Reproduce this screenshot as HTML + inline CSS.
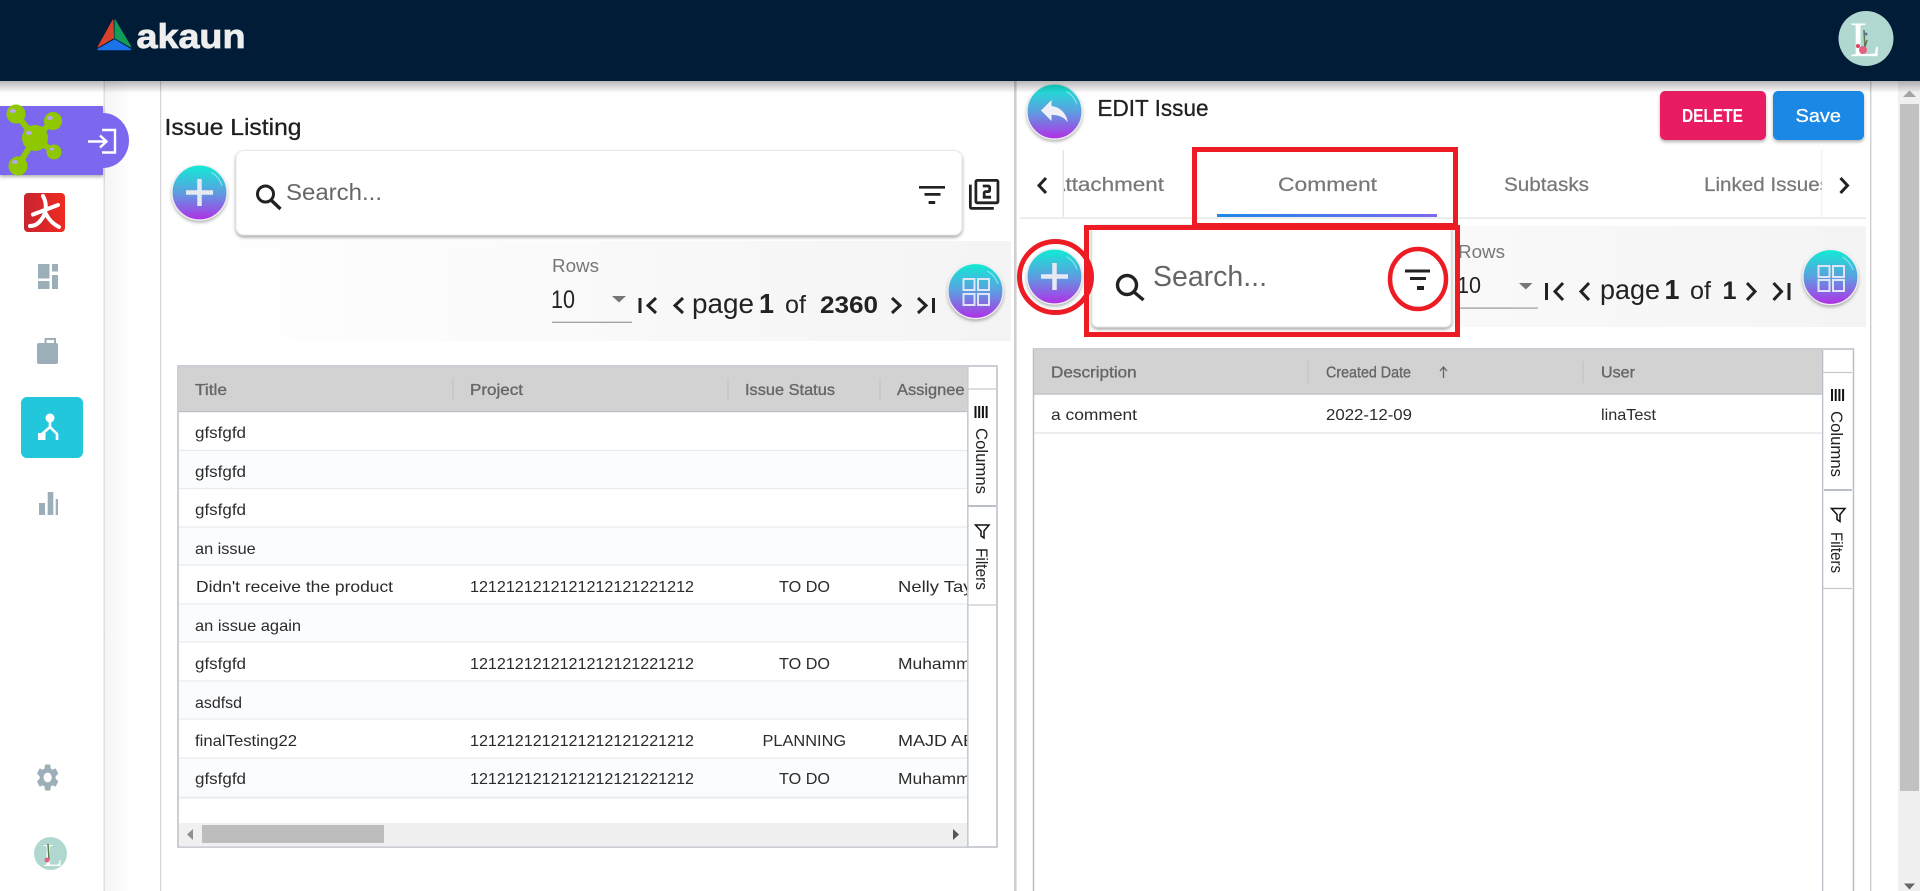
<!DOCTYPE html>
<html lang="en"><head><meta charset="utf-8"><title>Issue Listing</title>
<style>
html,body{margin:0;padding:0;background:#fff;width:1920px;height:891px;overflow:hidden}
svg{display:block}
text{font-family:"Liberation Sans",Arial,sans-serif}
.r{font-size:16px;fill:#2b2b2b}
.h{font-size:16px;fill:#666;stroke:#666;stroke-width:.35px}
.t{font-size:19px;fill:#777;stroke:#777;stroke-width:.2px}
.p{fill:#222}
.c{fill:none;stroke:#222;stroke-width:3}
</style></head><body>
<svg xmlns="http://www.w3.org/2000/svg" width="1920" height="891" viewBox="0 0 1920 891">
<defs>
<linearGradient id="bg" x1="0" y1="0" x2="0" y2="1"><stop offset="0" stop-color="#10ecd4"/><stop offset=".5" stop-color="#5c9fe0"/><stop offset="1" stop-color="#b22ee6"/></linearGradient>
<linearGradient id="band" x1="0" y1="0" x2="1" y2="0"><stop offset="0" stop-color="#fff"/><stop offset="1" stop-color="#f4f4f4"/></linearGradient>
<linearGradient id="side" x1="0" y1="0" x2="1" y2="0"><stop offset="0" stop-color="#f5f5f5"/><stop offset=".5" stop-color="#fff"/></linearGradient>
<linearGradient id="hs" x1="0" y1="0" x2="0" y2="1"><stop offset="0" stop-color="#000" stop-opacity=".28"/><stop offset="1" stop-color="#000" stop-opacity="0"/></linearGradient>
<linearGradient id="red" x1="0" y1="0" x2="1" y2="0"><stop offset="0" stop-color="#c9252f"/><stop offset=".45" stop-color="#d8262a"/><stop offset="1" stop-color="#f02b20"/></linearGradient>
<linearGradient id="tabu" x1="0" y1="0" x2="1" y2="0"><stop offset="0" stop-color="#1e88e5"/><stop offset="1" stop-color="#7b68ee"/></linearGradient>
<linearGradient id="edgeL" x1="0" y1="0" x2="1" y2="0"><stop offset="0" stop-color="#fff"/><stop offset=".8" stop-color="#fff"/><stop offset="1" stop-color="#d8d8d8"/></linearGradient>
<linearGradient id="edgeR" x1="0" y1="0" x2="1" y2="0"><stop offset="0" stop-color="#d8d8d8"/><stop offset=".1" stop-color="#fff"/><stop offset="1" stop-color="#fff"/></linearGradient>
<filter id="sh" x="-20%" y="-20%" width="140%" height="150%"><feDropShadow dx="0" dy="2" stdDeviation="1.5" flood-color="#000" flood-opacity=".3"/></filter>
<filter id="shb" x="-20%" y="-20%" width="140%" height="150%"><feDropShadow dx="0" dy="2" stdDeviation="1.5" flood-color="#000" flood-opacity=".35"/></filter>
<clipPath id="cl"><rect x="179" y="412" width="788" height="386"/></clipPath>
<clipPath id="cll"><rect x="1063" y="150" width="759" height="68"/></clipPath>
<symbol id="btn" viewBox="-30 -30 60 60" width="60" height="60" overflow="visible">
<circle r="27.5" fill="url(#bg)" stroke="#eceff2" stroke-width="1.2" filter="url(#sh)"/>
<path d="M12 -20 A23.5 23.5 0 0 1 22.5 -7" fill="none" stroke="#fff" stroke-opacity=".45" stroke-width="1.2"/>
</symbol>
</defs>

<!-- content background -->
<rect width="1920" height="891" fill="#fff"/>
<rect x="105" y="81" width="55" height="810" fill="url(#side)"/>
<rect x="103.5" y="81" width="1.5" height="810" fill="#dedede"/>
<rect x="160" y="81" width="1.2" height="810" fill="#d4d4d4"/>

<!-- right scrollbar -->
<rect x="1898" y="81" width="22" height="810" fill="#f0f0f0"/>
<rect x="1900" y="104" width="19" height="687" fill="#c1c1c1"/>
<path d="M1903 97 L1909.5 90.5 L1916 97Z" fill="#a3a3a3"/>
<path d="M1904 883.5 H1915 L1909.5 889.5Z" fill="#666"/>
<rect x="1870" y="81" width="1.4" height="810" fill="#cfcfcf"/>

<!-- left panel -->
<text x="164.500" y="135" font-size="23" fill="#1f1f1f" stroke="#1f1f1f" stroke-width=".3" textLength="137" lengthAdjust="spacingAndGlyphs">Issue Listing</text>
<rect x="165" y="241" width="846" height="100" fill="url(#band)"/>
<use href="#btn" x="169.5" y="162.5"/>
<path d="M199.5 179v27M186 192.500h27" stroke="#e6e9f2" stroke-width="4.500"/>
<rect x="236" y="150.5" width="726" height="84.5" rx="8" fill="#fff" stroke="#e9e9e9" filter="url(#shb)"/>
<circle cx="265.5" cy="194" r="8" fill="none" stroke="#222" stroke-width="3"/>
<path d="M271 200l9.5 9" stroke="#222" stroke-width="3.4"/>
<text x="286" y="200" font-size="23" fill="#666" textLength="96" lengthAdjust="spacingAndGlyphs">Search...</text>
<path d="M919 186h26v2.6h-26zM924.5 193h16v2.8h-16zM928.6 201h6.6v3h-6.6z" fill="#222"/>
<path transform="translate(967.6 177.6) scale(1.38 1.4)" fill="#222" d="M3 5H1v16c0 1.1.9 2 2 2h16v-2H3V5zm18-4H7c-1.1 0-2 .9-2 2v14c0 1.1.9 2 2 2h14c1.1 0 2-.9 2-2V3c0-1.1-.9-2-2-2zm0 16H7V3h14v14zm-4-4h-4v-2h2c1.1 0 2-.89 2-2V7c0-1.11-.9-2-2-2h-4v2h4v2h-2c-1.1 0-2 .89-2 2v4h6v-2z"/>

<text x="552" y="272" font-size="18" fill="#777" textLength="47" lengthAdjust="spacingAndGlyphs">Rows</text>
<text x="551" y="308" font-size="25" fill="#222" textLength="24" lengthAdjust="spacingAndGlyphs">10</text>
<path d="M612 296h14l-7 6.5z" fill="#777"/>
<rect x="552" y="321.7" width="80" height="1.2" fill="#999"/>
<path d="M640 298v15M656 298l-8 7.5 8 7.5M683 298l-8 7.5 8 7.5M892 298l8 7.5-8 7.5M918 298l8 7.5-8 7.5M933.5 298v15" class="c"/>
<text x="692" y="313" font-size="28" class="p" textLength="62" lengthAdjust="spacingAndGlyphs">page</text>
<text x="759" y="313" font-size="28" font-weight="bold" class="p" textLength="15" lengthAdjust="spacingAndGlyphs">1</text>
<text x="785" y="313" font-size="25" class="p" textLength="21" lengthAdjust="spacingAndGlyphs">of</text>
<text x="820" y="313" font-size="24" font-weight="bold" class="p" textLength="58" lengthAdjust="spacingAndGlyphs">2360</text>
<use href="#btn" x="945.5" y="261"/>
<path d="M963.5 279h11v11h-11zM978 279h11v11h-11zM963.5 294h11v11h-11zM978 294h11v11h-11z" fill="none" stroke="#dfe5f5" stroke-width="2"/>

<!-- left table -->
<rect x="178" y="366" width="819" height="481" fill="#fff" stroke="#babfc7" stroke-width="1.5"/>
<rect x="179" y="367" width="788" height="44.5" fill="#d2d2d2"/>
<rect x="179" y="411" width="788" height="1.2" fill="#babfc7"/>
<path d="M453 378v22M728 378v22M880 378v22" stroke="#c6c6c6" stroke-width="1.5"/>
<rect x="179" y="450.5" width="788" height="38" fill="#fbfcfe"/>
<rect x="179" y="527" width="788" height="38" fill="#fbfcfe"/>
<rect x="179" y="604" width="788" height="38" fill="#fbfcfe"/>
<rect x="179" y="681" width="788" height="38" fill="#fbfcfe"/>
<rect x="179" y="758" width="788" height="39" fill="#fbfcfe"/>
<path d="M179 450.5h788M179 488.5h788M179 527h788M179 565h788M179 604h788M179 642h788M179 681h788M179 719h788M179 758h788" stroke="#e8ebef" stroke-width="1.2"/>
<rect x="179" y="796.5" width="788" height="2" fill="#e8ebef"/>
<text x="195" y="395" class="h" textLength="32" lengthAdjust="spacingAndGlyphs">Title</text>
<text x="470" y="395" class="h" textLength="53" lengthAdjust="spacingAndGlyphs">Project</text>
<text x="745" y="395" class="h" textLength="90" lengthAdjust="spacingAndGlyphs">Issue Status</text>
<text x="897" y="395" class="h" textLength="67.5" lengthAdjust="spacingAndGlyphs">Assignee</text>
<g class="rows">
<text x="195" y="438" class="r" textLength="51" lengthAdjust="spacingAndGlyphs">gfsfgfd</text>
<text x="195" y="477" class="r" textLength="51" lengthAdjust="spacingAndGlyphs">gfsfgfd</text>
<text x="195" y="515" class="r" textLength="51" lengthAdjust="spacingAndGlyphs">gfsfgfd</text>
<text x="195" y="554" class="r" textLength="60.7" lengthAdjust="spacingAndGlyphs">an issue</text>
<text x="196" y="592" class="r" textLength="197" lengthAdjust="spacingAndGlyphs">Didn't receive the product</text>
<text x="195" y="631" class="r" textLength="106" lengthAdjust="spacingAndGlyphs">an issue again</text>
<text x="195" y="669" class="r" textLength="51" lengthAdjust="spacingAndGlyphs">gfsfgfd</text>
<text x="195" y="708" class="r" textLength="47" lengthAdjust="spacingAndGlyphs">asdfsd</text>
<text x="195" y="746" class="r" textLength="102" lengthAdjust="spacingAndGlyphs">finalTesting22</text>
<text x="195" y="784" class="r" textLength="51" lengthAdjust="spacingAndGlyphs">gfsfgfd</text>
<text x="470" y="592" class="r" textLength="224" lengthAdjust="spacingAndGlyphs">1212121212121212121221212</text>
<text x="470" y="669" class="r" textLength="224" lengthAdjust="spacingAndGlyphs">1212121212121212121221212</text>
<text x="470" y="746" class="r" textLength="224" lengthAdjust="spacingAndGlyphs">1212121212121212121221212</text>
<text x="470" y="784" class="r" textLength="224" lengthAdjust="spacingAndGlyphs">1212121212121212121221212</text>
<text x="779" y="592" class="r" textLength="51" lengthAdjust="spacingAndGlyphs">TO DO</text>
<text x="779" y="669" class="r" textLength="51" lengthAdjust="spacingAndGlyphs">TO DO</text>
<text x="762.5" y="746" class="r" textLength="83.6" lengthAdjust="spacingAndGlyphs">PLANNING</text>
<text x="779" y="784" class="r" textLength="51" lengthAdjust="spacingAndGlyphs">TO DO</text>
<g clip-path="url(#cl)">
<text x="898" y="592" class="r" textLength="95" lengthAdjust="spacingAndGlyphs">Nelly Taylor</text>
<text x="898" y="669" class="r" textLength="92" lengthAdjust="spacingAndGlyphs">Muhammad</text>
<text x="898" y="746" class="r" textLength="90" lengthAdjust="spacingAndGlyphs">MAJD ABU</text>
<text x="898" y="784" class="r" textLength="92" lengthAdjust="spacingAndGlyphs">Muhammad</text>
</g>
</g>
<rect x="179" y="823" width="788" height="23.5" fill="#f0f0f0"/>
<rect x="202" y="825" width="182" height="18" fill="#bdbdbd"/>
<path d="M193 829v11l-6-5.500z" fill="#8f8f8f"/>
<path d="M953 829v11l6-5.500z" fill="#555"/>
<rect x="967.200" y="367" width="1.300" height="480" fill="#babfc7"/>
<path d="M968 389h28M968 605h28" stroke="#c5c9cf" stroke-width="1.200"/>
<path d="M968 506h28" stroke="#babfc7" stroke-width="2"/>
<path d="M975.500 406v12M979.200 406v12M982.900 406v12M986.600 406v12" stroke="#111" stroke-width="2"/>
<text transform="translate(976 428) rotate(90)" font-size="17" fill="#222" textLength="66" lengthAdjust="spacingAndGlyphs">Columns</text>
<path d="M975.500 525H989L984 531V538L981 536V531Z" fill="none" stroke="#111" stroke-width="1.500"/>
<text transform="translate(976 548) rotate(90)" font-size="17" fill="#222" textLength="42" lengthAdjust="spacingAndGlyphs">Filters</text>

<!-- divider -->
<rect x="1014" y="81" width="2.600" height="810" fill="#cfcfcf"/>

<!-- right panel top -->
<use href="#btn" x="1024.500" y="81.500"/>
<path transform="translate(1036.500 92.500) scale(1.500)" fill="#eef0f6" d="M10 9V5l-7 7 7 7v-4.100c5 0 8.500 1.600 11 5.100-1-5-4-10-11-11z"/>
<text x="1097.500" y="116" font-size="23" fill="#222" stroke="#222" stroke-width=".3" textLength="111" lengthAdjust="spacingAndGlyphs">EDIT Issue</text>
<rect x="1660" y="91" width="106" height="49" rx="5" fill="#e91e63" filter="url(#sh)"/>
<text x="1682" y="122" font-size="18" font-weight="bold" fill="#fff" textLength="61" lengthAdjust="spacingAndGlyphs">DELETE</text>
<rect x="1773" y="91" width="91" height="49" rx="5" fill="#1e88e5" filter="url(#sh)"/>
<text x="1795.500" y="122" font-size="18" fill="#fff" stroke="#fff" stroke-width=".3" textLength="45.500" lengthAdjust="spacingAndGlyphs">Save</text>

<!-- tabs -->
<g clip-path="url(#cll)">
<text x="1050.500" y="191" class="t" textLength="113.500" lengthAdjust="spacingAndGlyphs">Attachment</text>
<text x="1278" y="191" class="t" textLength="99" lengthAdjust="spacingAndGlyphs">Comment</text>
<text x="1504" y="191" class="t" textLength="85" lengthAdjust="spacingAndGlyphs">Subtasks</text>
<text x="1704" y="191" class="t" stroke-width=".4" textLength="126" lengthAdjust="spacingAndGlyphs">Linked Issues</text>
</g>
<rect x="1055" y="150" width="9" height="67" fill="url(#edgeL)"/>
<rect x="1821.500" y="150" width="9" height="67" fill="url(#edgeR)"/>
<path d="M1046 178l-7 7.500 7 7.500M1840.500 178l7 7.500-7 7.500" class="c"/>
<rect x="1020" y="217.500" width="846" height="1.200" fill="#e0e0e0"/>
<rect x="1217" y="214" width="220" height="3" fill="url(#tabu)"/>

<!-- right band -->
<rect x="1020" y="226" width="846" height="101" fill="url(#band)"/>
<text x="1458" y="258" font-size="18" fill="#777" textLength="47" lengthAdjust="spacingAndGlyphs">Rows</text>
<text x="1457" y="293" font-size="23" fill="#222" textLength="24" lengthAdjust="spacingAndGlyphs">10</text>
<path d="M1519 283h13.500l-6.700 6.500z" fill="#777"/>
<rect x="1458" y="307.500" width="80" height="1.200" fill="#999"/>
<path d="M1546.500 283v17M1563 283l-8 8.500 8 8.500M1589 283l-8 8.500 8 8.500M1747 283l8 8.500-8 8.500M1773.500 283l8 8.500-8 8.500M1789 283v17" class="c"/>
<text x="1600" y="299" font-size="28" class="p" textLength="60" lengthAdjust="spacingAndGlyphs">page</text>
<text x="1664.500" y="299" font-size="28" font-weight="bold" class="p" textLength="15" lengthAdjust="spacingAndGlyphs">1</text>
<text x="1690" y="299" font-size="25" class="p" textLength="21" lengthAdjust="spacingAndGlyphs">of</text>
<text x="1722.500" y="299" font-size="25" font-weight="bold" class="p" textLength="14" lengthAdjust="spacingAndGlyphs">1</text>
<use href="#btn" x="1800.500" y="247"/>
<path d="M1818.500 266h11v11h-11zM1833 266h11v11h-11zM1818.500 280h11v11h-11zM1833 280h11v11h-11z" fill="none" stroke="#dfe5f5" stroke-width="2"/>

<use href="#btn" x="1024.500" y="246.500"/>
<path d="M1054.500 263v27M1041 276.500h27" stroke="#e6e9f2" stroke-width="4.500"/>

<rect x="1092" y="225" width="359" height="102" rx="6" fill="#fff" stroke="#e9e9e9" filter="url(#shb)"/>
<circle cx="1127" cy="285" r="9.500" fill="none" stroke="#222" stroke-width="3.400"/>
<path d="M1134 292l9.500 8" stroke="#222" stroke-width="3.400"/>
<text x="1153" y="286" font-size="29" fill="#666" textLength="114" lengthAdjust="spacingAndGlyphs">Search...</text>
<path d="M1405 269.500h25v3h-25zM1410 277h16v3h-16zM1417 286h7v4h-7z" fill="#222"/>

<!-- right table -->
<rect x="1033.500" y="349" width="820" height="560" fill="#fff" stroke="#babfc7" stroke-width="1.500"/>
<rect x="1034" y="350" width="788" height="44" fill="#d2d2d2"/>
<rect x="1034" y="393.500" width="788" height="1.200" fill="#babfc7"/>
<path d="M1308 361v22M1583 361v22" stroke="#c6c6c6" stroke-width="1.500"/>
<path d="M1034 433h788" stroke="#dfe2e6" stroke-width="1.200"/>
<text x="1051" y="377.500" class="h" textLength="85.700" lengthAdjust="spacingAndGlyphs">Description</text>
<text x="1326" y="377.500" class="h" textLength="85" lengthAdjust="spacingAndGlyphs">Created Date</text>
<path d="M1443.500 378v-11M1440 371l3.500-4 3.500 4" fill="none" stroke="#666" stroke-width="1.300"/>
<text x="1601" y="377.500" class="h" textLength="34" lengthAdjust="spacingAndGlyphs">User</text>
<text x="1051" y="420" class="r" textLength="86" lengthAdjust="spacingAndGlyphs">a comment</text>
<text x="1326" y="420" class="r" textLength="86" lengthAdjust="spacingAndGlyphs">2022-12-09</text>
<text x="1601" y="420" class="r" textLength="55" lengthAdjust="spacingAndGlyphs">linaTest</text>
<rect x="1822" y="350" width="1.300" height="541" fill="#babfc7"/>
<path d="M1823 372.500h29M1823 588.500h29" stroke="#c5c9cf" stroke-width="1.200"/>
<path d="M1824 490h28" stroke="#babfc7" stroke-width="2"/>
<path d="M1832 389v12M1835.700 389v12M1839.400 389v12M1843.100 389v12" stroke="#111" stroke-width="2"/>
<text transform="translate(1831 411) rotate(90)" font-size="17" fill="#222" textLength="66" lengthAdjust="spacingAndGlyphs">Columns</text>
<path d="M1831.500 508.500H1845L1840 514.500V521.500L1837 519.500V514.500Z" fill="none" stroke="#111" stroke-width="1.500"/>
<text transform="translate(1831 532) rotate(90)" font-size="17" fill="#222" textLength="41" lengthAdjust="spacingAndGlyphs">Filters</text>

<!-- red annotations -->
<rect x="1194.500" y="149.500" width="261" height="76" fill="none" stroke="#ed1c24" stroke-width="5"/>
<rect x="1086.500" y="227.500" width="371" height="107" fill="none" stroke="#ed1c24" stroke-width="5"/>
<ellipse cx="1418" cy="279" rx="28" ry="30" fill="none" stroke="#ed1c24" stroke-width="4.500"/>
<ellipse cx="1055.500" cy="277" rx="36" ry="35.500" fill="none" stroke="#ed1c24" stroke-width="5"/>

<!-- sidebar icons -->
<rect x="0" y="106" width="103" height="69" fill="#7b68ee" filter="url(#sh)"/>
<path d="M103 113 A26 27.500 0 0 1 103 168Z" fill="#7b68ee"/>
<rect x="0" y="106" width="103" height="69" fill="#7b68ee"/>
<g fill="#8fc800">
<path d="M35 138L16 114M35 138L53 121M35 138L54 152M35 138L18 166" fill="none" stroke="#8fc800" stroke-width="6"/>
<circle cx="35" cy="138" r="13"/>
<circle cx="16" cy="114" r="9.500"/>
<circle cx="53" cy="121" r="9"/>
<circle cx="54" cy="152" r="7.500"/>
<circle cx="18" cy="166" r="9.500"/>
</g>
<g fill="#b7a7ea"><ellipse cx="13" cy="111" rx="3" ry="2"/><ellipse cx="50" cy="118" rx="3" ry="2"/><ellipse cx="29" cy="133" rx="3" ry="2"/><ellipse cx="15" cy="162" rx="3" ry="2"/><ellipse cx="52" cy="149" rx="2.500" ry="1.500"/></g>
<path d="M88 141.500h17M100 135.500l6.500 6-6.500 6M102 130h13v22.500h-13" fill="none" stroke="#fff" stroke-width="2.400"/>

<rect x="24" y="193" width="41" height="39" rx="4" fill="url(#red)"/>
<path d="M33 214.500L58 205M43 196C47 203 47 213 41 220 38 224 35 226 30 226M46 214C49 220 53 224 59 227" fill="none" stroke="#fff" stroke-width="4" stroke-linecap="round"/>

<g fill="#9cafb9">
<rect x="38" y="264" width="11.500" height="14.500"/><rect x="52" y="264" width="6" height="7.500"/><rect x="38" y="281" width="11.500" height="8"/><rect x="52" y="275" width="6" height="14"/>
<rect x="37" y="343" width="21" height="21" rx="2"/>
<rect x="39" y="503" width="6" height="12"/><rect x="47.700" y="492" width="5.600" height="23"/><rect x="55.700" y="499" width="2.300" height="16"/>
<path transform="translate(34.200 761.300) scale(1.120 1.350)" d="M19.140 12.940c.04-.3.06-.61.06-.94 0-.32-.02-.64-.07-.94l2.030-1.580c.18-.14.23-.41.12-.61l-1.920-3.320c-.12-.22-.37-.29-.59-.22l-2.390.96c-.5-.38-1.030-.7-1.620-.94l-.36-2.540c-.04-.24-.24-.41-.48-.41h-3.840c-.24 0-.43.17-.47.41l-.36 2.540c-.59.24-1.130.57-1.620.94l-2.390-.96c-.22-.08-.47 0-.59.22L2.740 8.870c-.12.21-.08.47.12.61l2.030 1.580c-.05.3-.09.63-.09.94s.02.64.07.94l-2.030 1.580c-.18.14-.23.41-.12.61l1.920 3.320c.12.22.37.29.59.22l2.390-.96c.5.38 1.030.7 1.620.94l.36 2.540c.05.24.24.41.48.41h3.840c.24 0 .44-.17.47-.41l.36-2.540c.59-.24 1.130-.56 1.620-.94l2.390.96c.22.08.47 0 .59-.22l1.920-3.320c.12-.22.07-.47-.12-.61l-2.010-1.580zM12 15.600c-1.980 0-3.600-1.620-3.600-3.600s1.620-3.600 3.600-3.600 3.600 1.620 3.600 3.600-1.620 3.600-3.600 3.600z"/>
</g>
<path d="M45.500 343v-4h9.500v4" fill="none" stroke="#9cafb9" stroke-width="2"/>
<rect x="21" y="397" width="62" height="61" rx="6" fill="#22c7dc"/>
<circle cx="50" cy="418" r="4.500" fill="#fff"/>
<path d="M50 421v7M50 427l-8 7M50 427l7 7v6" fill="none" stroke="#fff" stroke-width="2.600"/>
<rect x="38" y="433" width="7.500" height="7" fill="#fff"/>

<circle cx="50.500" cy="853.500" r="16.500" fill="#b0d8d0"/>
<text x="43" y="866" font-size="32" fill="#fff" style="font-family:'Liberation Serif',serif">L</text>
<path d="M48 844l1 16" stroke="#5a7a50" stroke-width="1.500"/>
<circle cx="47" cy="860" r="2.500" fill="#e2627e"/>

<!-- header -->
<rect x="0" y="81" width="1920" height="12" fill="url(#hs)"/>
<rect x="0" y="0" width="1920" height="81" fill="#001c37"/>
<path d="M113 20L98 47 113.500 38Z" fill="#d9412c" stroke="#d9412c" stroke-linejoin="round"/>
<path d="M115 20L131 47 115 38Z" fill="#0f9d58" stroke="#0f9d58" stroke-linejoin="round"/>
<path d="M114.500 40L130.500 49.500H98Z" fill="#1a73e8" stroke="#1a73e8" stroke-linejoin="round" stroke-width="1.500"/>
<text x="136.500" y="48" font-size="34" font-weight="bold" fill="#eeeeee" stroke="#eeeeee" stroke-width=".8" textLength="109" lengthAdjust="spacingAndGlyphs">akaun</text>
<circle cx="1866" cy="38.500" r="27.500" fill="#b0d8d0"/>
<text x="1850" y="56" font-size="50" fill="#fff" style="font-family:'Liberation Serif',serif" textLength="31" lengthAdjust="spacingAndGlyphs">L</text>
<path d="M1864 30l1 20M1867 40l-3 10" stroke="#5a7a50" stroke-width="1.500" fill="none"/>
<circle cx="1863" cy="50" r="4" fill="#e2627e"/><circle cx="1858" cy="46" r="2" fill="#d9465f"/><circle cx="1866" cy="34" r="1.500" fill="#6a6aa8"/>
</svg>
</body></html>
